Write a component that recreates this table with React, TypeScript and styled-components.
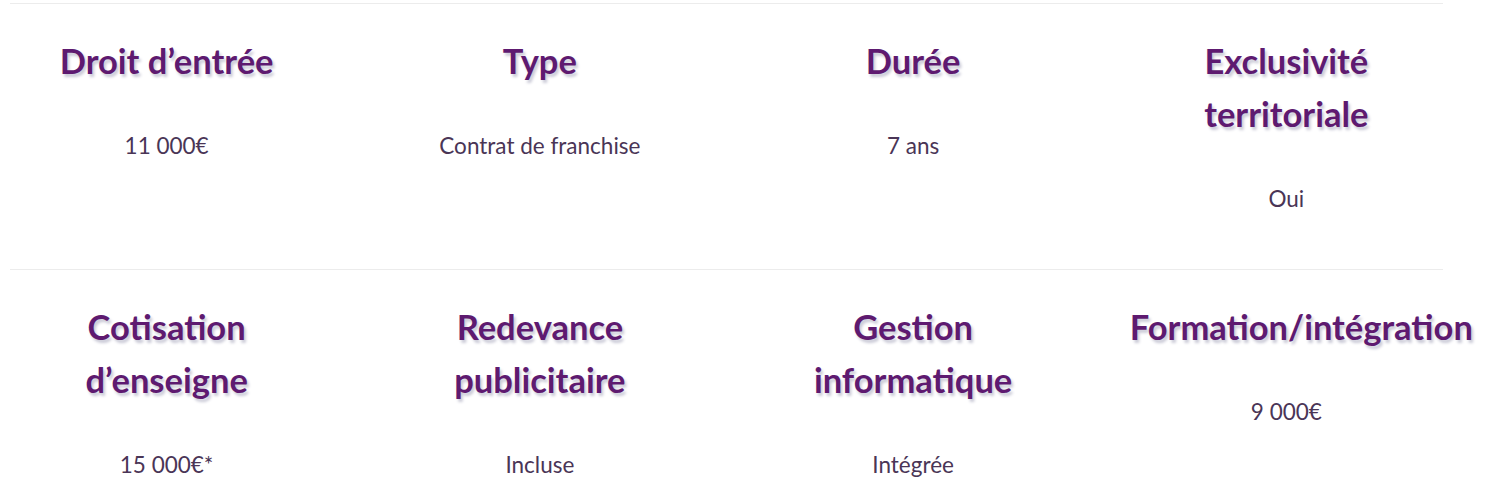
import styled, { createGlobalStyle } from "styled-components";

const GlobalStyle = createGlobalStyle`
	body {
		margin: 0;
		background: #fff;
		font-family: Lato, "Liberation Sans", sans-serif;
		overflow: hidden;
	}
`;

const Page = styled.div`
	width: 1433px;
	margin-left: 10px;
	padding-top: 3px;
`;

const Row = styled.div`
	border-top: 1px solid #ececec;
`;

const Grid = styled.div`
	display: grid;
	grid-template-columns: repeat(4, 1fr);
	margin: 0 -30px;
	padding-bottom: 53px;
`;

const Cell = styled.div`
	min-width: 0;
	padding: 30px 30px 0;
	text-align: center;
`;

const Heading = styled.h3`
	margin: 0;
	font-family: Lato, "Liberation Sans", sans-serif;
	font-weight: 700;
	font-size: 34.5px;
	line-height: 53px;
	white-space: nowrap;
	color: #5e1a70;
	text-shadow: 2px 3px 3px #c9c9d6;
`;

const Value = styled.p`
	margin: 42px 0 0;
	font-family: Lato, "Liberation Sans", sans-serif;
	font-size: 22.5px;
	line-height: 34px;
	color: #4a3556;
`;

type Item = { title: string[]; value: string };

const rows: Item[][] = [
	[
		{ title: ["Droit d’entrée"], value: "11 000€" },
		{ title: ["Type"], value: "Contrat de franchise" },
		{ title: ["Durée"], value: "7 ans" },
		{ title: ["Exclusivité", "territoriale"], value: "Oui" },
	],
	[
		{ title: ["Cotisation", "d’enseigne"], value: "15 000€*" },
		{ title: ["Redevance", "publicitaire"], value: "Incluse" },
		{ title: ["Gestion", "informatique"], value: "Intégrée" },
		{ title: ["Formation/intégration"], value: "9 000€" },
	],
];

export default function App() {
	return (
		<>
			<GlobalStyle />
			<Page>
				{rows.map((row, i) => (
					<Row key={i}>
						<Grid>
							{row.map((item) => (
								<Cell key={item.value}>
									<Heading>
										{item.title.map((line, j) => (
											<span key={j}>
												{j > 0 && <br />}
												{line}
											</span>
										))}
									</Heading>
									<Value>{item.value}</Value>
								</Cell>
							))}
						</Grid>
					</Row>
				))}
			</Page>
		</>
	);
}
